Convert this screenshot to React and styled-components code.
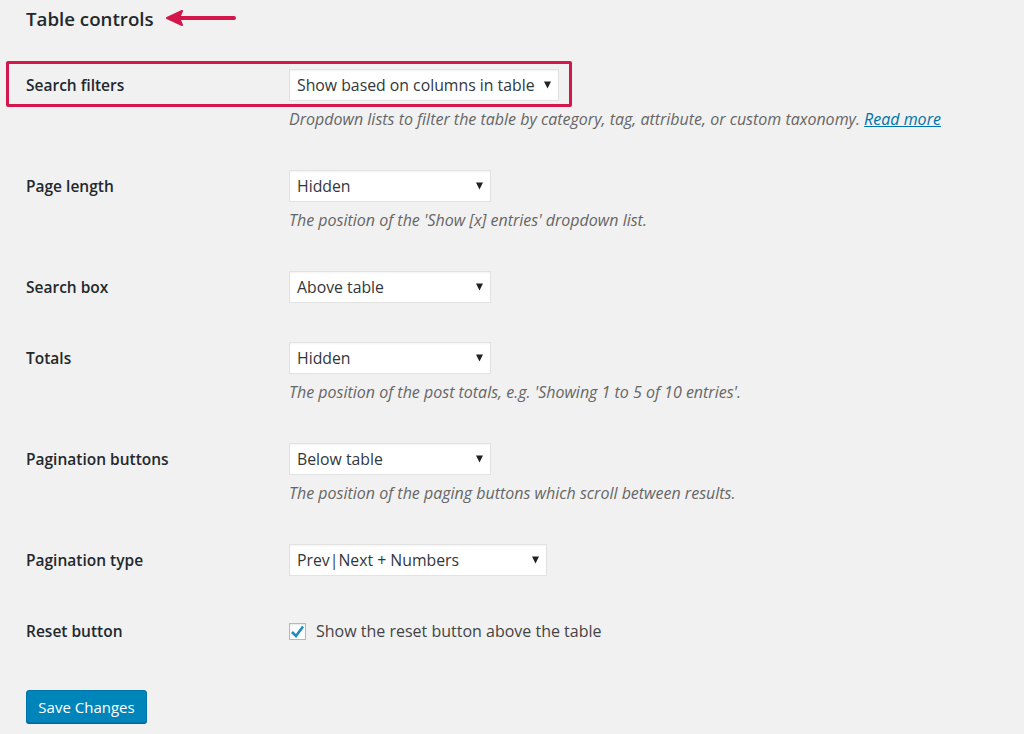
import React from 'react';
import styled, { createGlobalStyle } from 'styled-components';

const Global = createGlobalStyle`
    html, body{
        margin: 0;
        padding: 0;
        background: #f1f1f1;
    }
    body{
        font-family: "Open Sans", "Noto Sans", sans-serif;
        color: #23282d;
    }
`;

const Page = styled.div`
    width: 1024px;
    height: 734px;
    overflow: hidden;
    padding: 0 0 0 26px;
    box-sizing: border-box;
`;

const TitleRow = styled.div`
    display: flex;
    align-items: center;
    gap: 11px;
    height: 38px;
    margin-top: -1px;

    h2{
        margin: 0;
        font-size: 18.7px;
        font-weight: 600;
        color: #23282d;
    }
`;

const Form = styled.div`
    display: flex;
    flex-direction: column;
    margin-top: 12px;
`;

const Row = styled.div`
    position: relative;
    display: grid;
    grid-template-columns: 263px 1fr;
    padding: 20px 0 19px;
`;

const Label = styled.div`
    font-size: 15.5px;
    font-weight: 600;
    color: #23282d;
    height: 32px;
    line-height: 32px;
`;

const Field = styled.div`
    display: flex;
    flex-direction: column;
`;

const Select = styled.div`
    width: ${p => p.$width}px;
    height: 32px;
    box-sizing: border-box;
    background: #fff;
    border: 1px solid #e2e2e2;
    box-shadow: inset 0 1px 2px rgba(0,0,0,.05);
    display: flex;
    align-items: center;
    justify-content: space-between;
    padding: 0 7px 0 7px;
    font-size: 15.8px;
    color: #32373c;

    svg{
        flex: none;
    }
`;

const Desc = styled.p`
    margin: 7px 0 0;
    line-height: 23px;
    font-size: 16px;
    font-style: italic;
    color: #666;

    a{
        color: #0073aa;
        text-decoration: underline;
    }
`;

const Highlight = styled.div`
    position: absolute;
    left: -20px;
    top: 12px;
    width: 566px;
    height: 46px;
    box-sizing: border-box;
    border: 3px solid #d3174a;
    border-radius: 2px;
    pointer-events: none;
`;

const CheckLine = styled.label`
    display: flex;
    align-items: center;
    gap: 10px;
    height: 32px;
    font-size: 16px;
    color: #444;
`;

const Box = styled.span`
    width: 17px;
    height: 17px;
    box-sizing: border-box;
    border: 1px solid #b4b9be;
    background: #fff;
    box-shadow: inset 0 1px 2px rgba(0,0,0,.1);
    display: flex;
    align-items: center;
    justify-content: center;
`;

const SaveButton = styled.button`
    margin-top: 24px;
    width: 121px;
    height: 33px;
    background: #0085ba;
    border: 1px solid #0073aa;
    border-radius: 3px;
    box-shadow: 0 1px 0 #006799;
    color: #fff;
    font-family: "Open Sans", "Noto Sans", sans-serif;
    font-size: 15px;
    padding: 0;
    cursor: pointer;
`;

const Caret = () => (
    <svg width="7" height="8" viewBox="0 0 7 8">
        <path d="M0 0.5 H7 L3.5 7.5 Z" fill="#222" />
    </svg>
);

const Arrow = () => (
    <svg width="72" height="16" viewBox="0 0 72 16">
        <path d="M14 8 H69" stroke="#d3174a" strokeWidth="4" strokeLinecap="round" />
        <path d="M2 8 L17 1 L14 8 L17 15 Z" fill="#d3174a" stroke="#d3174a" strokeWidth="2" strokeLinejoin="round" />
    </svg>
);

const rows = [
    { label: 'Search filters', value: 'Show based on columns in table', width: 270, highlight: true,
      desc: <>Dropdown lists to filter the table by category, tag, attribute, or custom taxonomy. <a href="#">Read more</a></> },
    { label: 'Page length', value: 'Hidden', width: 202, desc: "The position of the 'Show [x] entries' dropdown list." },
    { label: 'Search box', value: 'Above table', width: 202 },
    { label: 'Totals', value: 'Hidden', width: 202, desc: "The position of the post totals, e.g. 'Showing 1 to 5 of 10 entries'." },
    { label: 'Pagination buttons', value: 'Below table', width: 202, desc: 'The position of the paging buttons which scroll between results.' },
    { label: 'Pagination type', value: 'Prev|Next + Numbers', width: 258 },
];

export default function App(){
    return <Page>
        <Global />
        <TitleRow>
            <h2>Table controls</h2>
            <Arrow />
        </TitleRow>

        <Form>
            {rows.map(r => (
                <Row key={r.label}>
                    {r.highlight && <Highlight />}
                    <Label>{r.label}</Label>
                    <Field>
                        <Select $width={r.width}>
                            <span>{r.value}</span>
                            <Caret />
                        </Select>
                        {r.desc && <Desc>{r.desc}</Desc>}
                    </Field>
                </Row>
            ))}

            <Row>
                <Label>Reset button</Label>
                <Field>
                    <CheckLine>
                        <Box>
                            <svg width="15" height="13" viewBox="0 0 15 13">
                                <path d="M2 7 L6 11 L13 1.5" fill="none" stroke="#1e8cbe" strokeWidth="2.6" />
                            </svg>
                        </Box>
                        Show the reset button above the table
                    </CheckLine>
                </Field>
            </Row>
        </Form>

        <SaveButton>Save Changes</SaveButton>
    </Page>
}
